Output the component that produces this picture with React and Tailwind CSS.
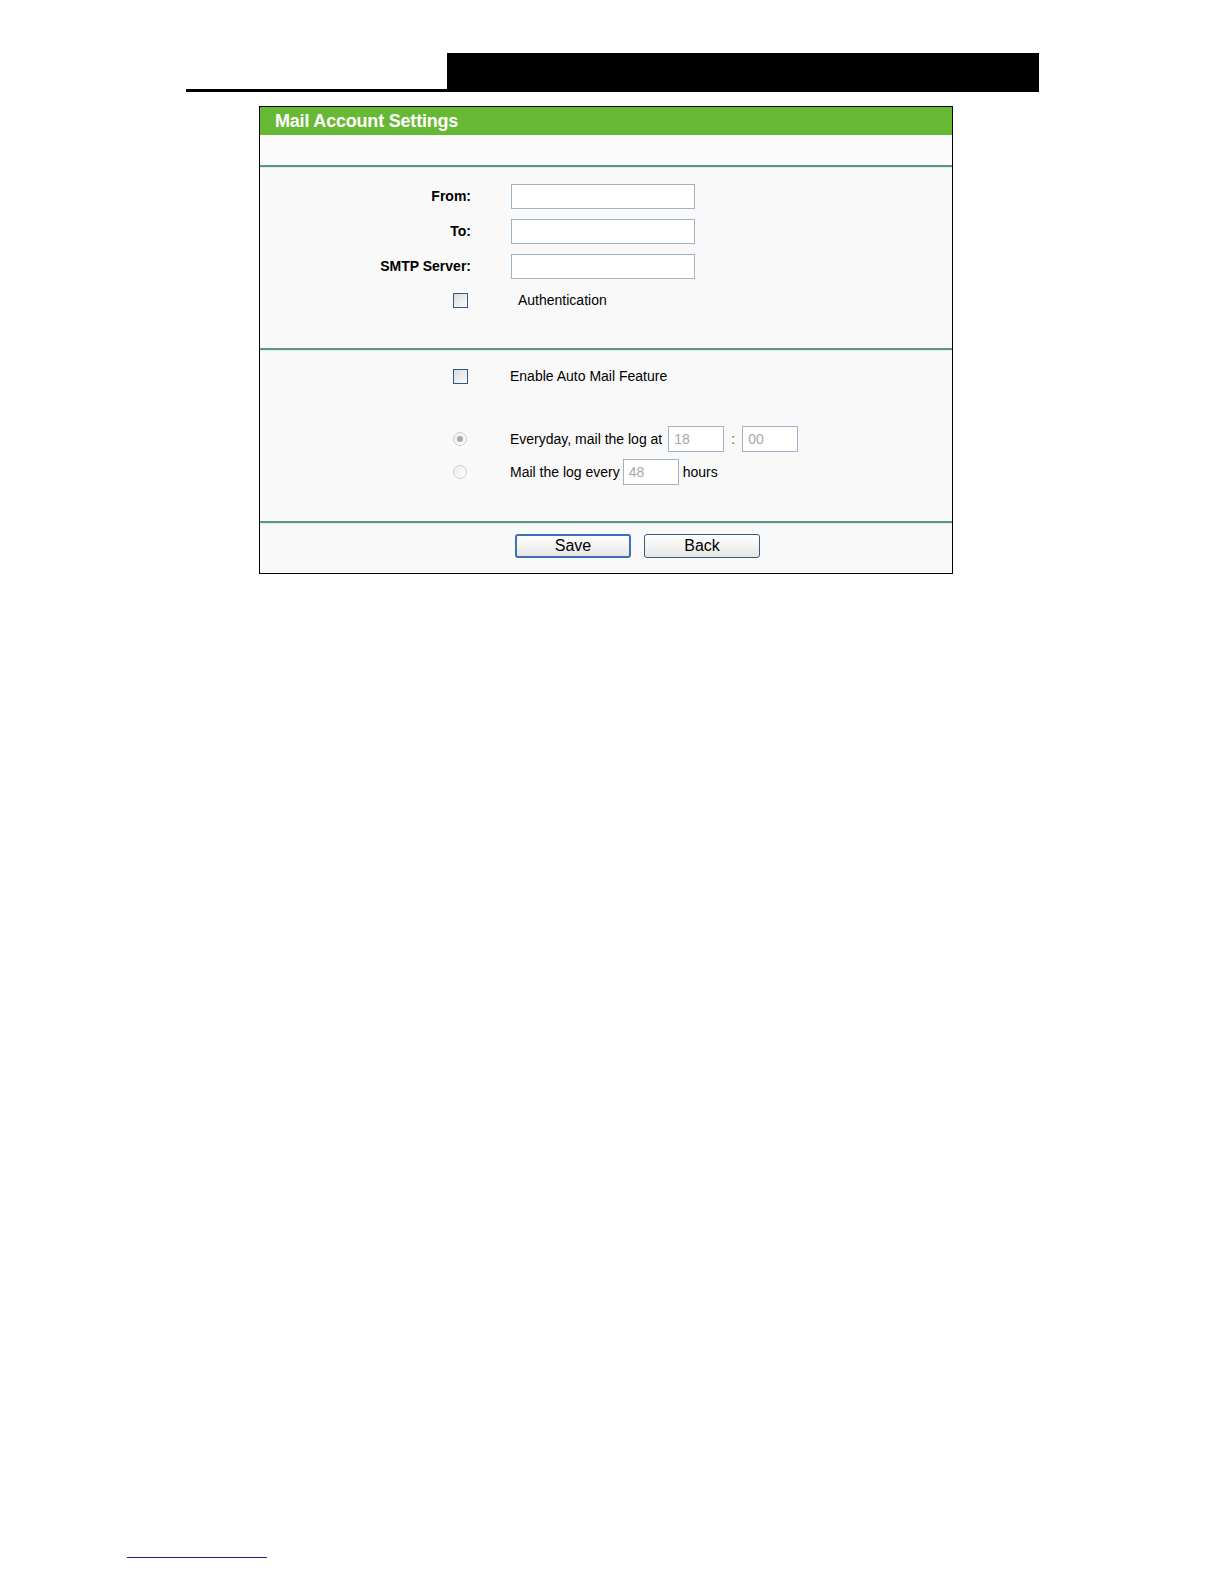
import React from 'react'

const font = { fontFamily: '"Liberation Sans", Arial, sans-serif' }

const TextBox = ({ value = '', w = 'w-[184px]', h = 'h-[26px]' }) => (
  <div className={`${w} ${h} border border-[#9fb3c8] bg-white px-[5px] flex items-center text-[14px] text-[#a8a8a8]`}>
    {value}
  </div>
)

const CheckBox = () => (
  <div className="w-[15px] h-[15px] border border-[#2d5a8a] bg-gradient-to-br from-[#dcdcdc] to-[#fbfbfb]" />
)

const Radio = ({ checked }) => (
  <div className="w-[14px] h-[14px] rounded-full border border-[#cfcfcf] bg-gradient-to-br from-[#ececec] to-white flex items-center justify-center">
    {checked && <div className="w-[6px] h-[6px] rounded-full bg-[#a9a9a9]" />}
  </div>
)

const Divider = () => <div className="h-[2px] bg-[#5e987c] border-b border-[#dfece4] box-content" />

const Field = ({ label }) => (
  <div className="flex items-center h-[25px]">
    <div className="w-[211px] text-right font-bold text-[14px] text-black">{label}</div>
    <div className="ml-[40px]"><TextBox h="h-[25px]" /></div>
  </div>
)

const Button = ({ children, primary }) => (
  <button
    className={`w-[116px] h-[24px] rounded-[3px] bg-gradient-to-b from-white to-[#e6e6e3] text-[16px] leading-none text-black ${
      primary ? 'border-2 border-[#3f6fb8]' : 'border border-[#3a5a80]'
    }`}
  >
    {children}
  </button>
)

export default function App() {
  return (
    <div className="h-[1584px] overflow-hidden bg-white pt-[53px]" style={font}>
      <div className="flex items-end ml-[186px]">
        <div className="w-[261px] h-[3px] bg-black" />
        <div className="w-[592px] h-[39px] bg-black" />
      </div>

      <div className="ml-[259px] mt-[14px] w-[694px] border border-black bg-[#f9f9f9]">
        <div className="h-[28px] bg-[#67b834] pl-[15px] flex items-center text-white font-bold text-[18px] tracking-[-0.2px]">
          Mail Account Settings
        </div>
        <div className="h-[30px] bg-[#fbfbfb]" />
        <Divider />

        <div className="h-[180px] pt-[16px] flex flex-col gap-[10px]">
          <Field label="From:" />
          <Field label="To:" />
          <Field label="SMTP Server:" />
          <div className="flex items-center h-[22px]">
            <div className="w-[208px] flex justify-end"><CheckBox /></div>
            <div className="ml-[50px] text-[14px] text-black">Authentication</div>
          </div>
        </div>
        <Divider />

        <div className="h-[170px] pt-[15px]">
          <div className="flex items-center h-[20px]">
            <div className="w-[208px] flex justify-end"><CheckBox /></div>
            <div className="ml-[42px] text-[14px] text-black">Enable Auto Mail Feature</div>
          </div>
          <div className="flex items-center h-[26px] mt-[40px]">
            <div className="w-[207px] flex justify-end"><Radio checked /></div>
            <div className="ml-[43px] flex items-center text-[14px] text-black">
              <span>Everyday, mail the log at</span>
              <div className="ml-[6px]"><TextBox value="18" w="w-[56px]" /></div>
              <span className="mx-[7px] text-[#555]">:</span>
              <TextBox value="00" w="w-[56px]" />
            </div>
          </div>
          <div className="flex items-center h-[26px] mt-[7px]">
            <div className="w-[207px] flex justify-end"><Radio /></div>
            <div className="ml-[43px] flex items-center text-[14px] text-black">
              <span>Mail the log every</span>
              <div className="ml-[3px]"><TextBox value="48" w="w-[56px]" /></div>
              <span className="ml-[4px]">hours</span>
            </div>
          </div>
        </div>
        <Divider />

        <div className="h-[49px] pl-[255px] pt-[10px] flex items-start gap-[13px]">
          <Button primary>Save</Button>
          <Button>Back</Button>
        </div>
      </div>

      <div className="ml-[127px] mt-[983px] w-[140px] h-[1px] bg-[#1c1c8a]" />
    </div>
  )
}
